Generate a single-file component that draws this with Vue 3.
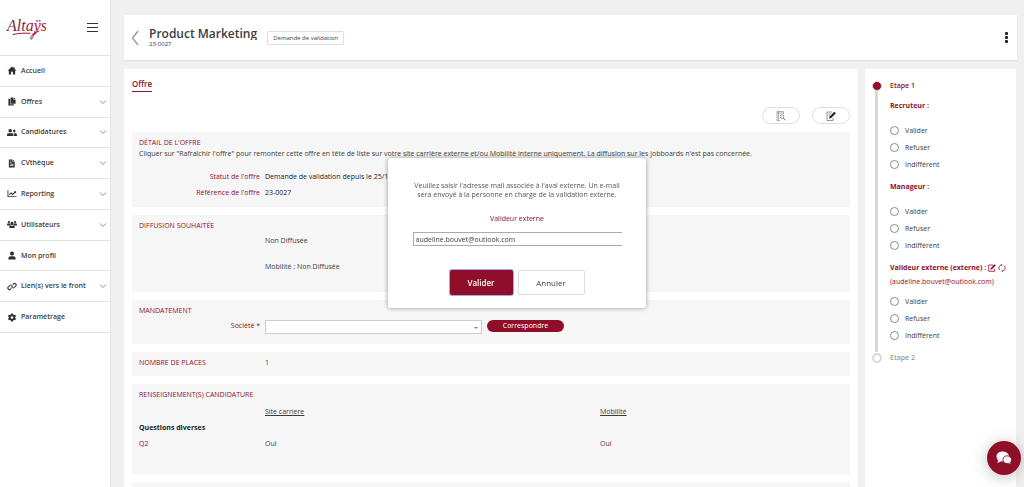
<template>
  <div class="layout">
    <aside class="sidebar">
      <div class="sidebar-head">
        <svg class="logo" viewBox="0 0 40 28" role="img" aria-label="Altaÿs">
          <defs>
            <linearGradient id="logoGradient" x1="0" x2="1">
              <stop offset="0" stop-color="#5d2440" />
              <stop offset="1" stop-color="#c4122f" />
            </linearGradient>
          </defs>
          <text x="1" y="17" class="logo-text">Altaÿs</text>
          <path d="M7 20.500C13 19 18 19 24 19.300M29 17C27.500 21 26.500 25.500 25 25C24 23 26 20 33 17" fill="none" stroke="#a3152f" stroke-width="1" stroke-linecap="round" />
        </svg>
        <button class="burger" aria-label="Menu">
          <span></span><span></span><span></span>
        </button>
      </div>
      <nav class="menu">
        <a v-for="item in menu" :key="item.label" href="#" class="menu-item">
          <svg class="menu-icon" :viewBox="item.box" aria-hidden="true">
            <path :d="item.icon" fill="#2f3033" fill-rule="evenodd" />
          </svg>
          <span class="menu-label">{{ item.label }}</span>
          <svg v-if="item.children" class="menu-chevron" viewBox="0 0 8 6" aria-hidden="true">
            <path d="M1 1.500L4 4.500L7 1.500" fill="none" stroke="#8c8c8c" />
          </svg>
        </a>
      </nav>
    </aside>

    <main class="main">
      <header class="page-head">
        <button class="back" aria-label="Retour">
          <svg viewBox="0 0 8 16"><path d="M7 1L1.500 8L7 15" fill="none" stroke="#a0a0a0" stroke-width="1.500" /></svg>
        </button>
        <div class="page-title">
          <h1>Product Marketing</h1>
          <p>23-0027</p>
        </div>
        <span class="status">Demande de validation</span>
        <button class="more" aria-label="Plus d'actions">
          <span></span><span></span><span></span>
        </button>
      </header>

      <div class="columns">
        <div class="offer">
          <a href="#" class="tab">Offre</a>
          <div class="actions">
            <button class="pill" aria-label="Aperçu">
              <svg viewBox="0 0 10 10">
                <path d="M4 9.500H1V.5H7.500V3M1 2H7.500M2.500 .5V9.500" fill="none" stroke="#999" stroke-width=".8" />
                <circle cx="6" cy="5.500" r="1.800" fill="#fff" stroke="#777" stroke-width=".8" />
                <path d="M7.300 7L9.300 9.300" stroke="#777" />
              </svg>
            </button>
            <button class="pill" aria-label="Modifier">
              <svg viewBox="0 0 10 10">
                <path d="M6 1H1V9.500H7V7M2.500 3H5M2.500 5H4" fill="none" stroke="#888" stroke-width=".9" />
                <path d="M3 7.800L3.700 5.500L8.300 .8L9.900 2.300L5.200 7Z" fill="#222" />
              </svg>
            </button>
          </div>

          <div class="sections">
            <section class="section detail">
              <h2>Détail de l'offre</h2>
              <p class="hint">Cliquer sur "Rafraîchir l'offre" pour remonter cette offre en tête de liste sur votre site carrière externe et/ou Mobilité interne uniquement. La diffusion sur les jobboards n'est pas concernée.</p>
              <dl class="fields">
                <dt>Statut de l'offre</dt>
                <dd>Demande de validation depuis le 25/10/2023</dd>
                <dt>Référence de l'offre</dt>
                <dd>23-0027</dd>
              </dl>
            </section>

            <section class="section diffusion">
              <h2>Diffusion souhaitée</h2>
              <p>Non Diffusée</p>
              <p>Mobilité : Non Diffusée</p>
            </section>

            <section class="section mandate">
              <h2>Mandatement</h2>
              <div class="mandate-row">
                <label for="company">Société *</label>
                <div class="select-wrap">
                  <select id="company" v-model="company">
                    <option value=""></option>
                  </select>
                </div>
                <button class="match">Correspondre</button>
              </div>
            </section>

            <section class="section places">
              <h2>Nombre de places</h2>
              <p>1</p>
            </section>

            <section class="section info">
              <h2>Renseignement(s) candidature</h2>
              <table>
                <thead>
                  <tr>
                    <td></td>
                    <th scope="col">Site carriere</th>
                    <th scope="col">Mobilité</th>
                  </tr>
                </thead>
                <tbody>
                  <tr>
                    <th scope="rowgroup" class="group-name" colspan="3">Questions diverses</th>
                  </tr>
                  <tr>
                    <th scope="row" class="question">Q2</th>
                    <td>Oui</td>
                    <td>Oui</td>
                  </tr>
                </tbody>
              </table>
            </section>

            <section class="section next"></section>
          </div>
        </div>

        <aside class="steps">
          <div class="step current">
            <h3>Etape 1</h3>
            <fieldset v-for="group in groups" :key="group.title">
              <legend>
                {{ group.title }}
                <template v-if="group.email">
                  <button class="mini" aria-label="Modifier le valideur">
                    <svg viewBox="0 0 8 8">
                      <path d="M5 1H.7V7.300H6.500V5" fill="none" stroke="#8f0f2b" stroke-width=".8" />
                      <path d="M2.300 5.800L2.800 4L6.500 .2L7.800 1.500L4.100 5.300Z" fill="#8f0f2b" />
                    </svg>
                  </button>
                  <button class="mini" aria-label="Relancer">
                    <svg viewBox="0 0 8 8">
                      <path d="M1.800 6.300A3.200 3.200 0 0 1 3.500 .9M6.200 1.700A3.200 3.200 0 0 1 4.500 7.100" fill="none" stroke="#8f0f2b" stroke-width=".8" />
                      <path d="M3.200 .1L4.800 .9L3.400 2ZM4.800 7.900L3.200 7.100L4.600 6Z" fill="#8f0f2b" />
                    </svg>
                  </button>
                </template>
              </legend>
              <p v-if="group.email" class="email">({{ group.email }})</p>
              <label v-for="choice in choices" :key="choice" class="choice">
                <input type="radio" :name="group.title" :value="choice" v-model="group.answer" />
                {{ choice }}
              </label>
            </fieldset>
          </div>
          <div class="step upcoming">
            <h3>Etape 2</h3>
          </div>
        </aside>
      </div>
    </main>

    <div v-if="isOpen" class="overlay">
      <form class="modal" role="dialog" aria-labelledby="modalText" @submit.prevent="closeModal">
        <p id="modalText">Veuillez saisir l'adresse mail associée à l'aval externe. Un e-mail sera envoyé à la personne en charge de la validation externe.</p>
        <label for="email">Valideur externe</label>
        <input id="email" type="text" v-model="email" />
        <div class="modal-actions">
          <button type="submit" class="confirm">Valider</button>
          <button type="button" class="cancel" @click="closeModal">Annuler</button>
        </div>
      </form>
    </div>

    <button class="chat" aria-label="Discussion">
      <svg viewBox="0 0 16 14">
        <path d="M6.500 .5C2.900 .5 .5 2.700 .5 5.500C.5 7 1.200 8.300 2.300 9.200C2.200 10.200 1.700 11 1 11.700C2.700 11.700 4.100 11.100 5 10.300C5.600 10.400 6.200 10.400 6.700 10.400C10.200 10.300 13 8.300 13 5.500C13 2.700 10.200 .5 6.500 .5Z" fill="#fff" />
        <path d="M11 4.800C8.800 4.800 6.900 6.400 6.900 8.700C6.900 11 8.700 12.500 11 12.500C11.500 12.500 12 12.400 12.400 12.300C13.200 12.900 14.200 13.200 15.200 13.200C14.800 12.700 14.500 12 14.500 11.300C15.100 10.600 15.500 9.700 15.500 8.700C15.500 6.400 13.500 4.800 11 4.800Z" fill="#fff" stroke="#8f0f2b" stroke-width=".9" />
      </svg>
    </button>
  </div>
</template>

<script setup>
import { ref } from 'vue'

const isOpen = ref(true)
const email = ref('audeline.bouvet@outlook.com')
const company = ref('')

const choices = ['Valider', 'Refuser', 'Indifférent']

const groups = ref([
  { title: 'Recruteur :', answer: '' },
  { title: 'Manageur :', answer: '' },
  { title: 'Valideur externe (externe) :', email: 'audeline.bouvet@outlook.com', answer: '' }
])

const person = 'M10 1A4.500 4.500 0 0 1 10 10A4.500 4.500 0 0 1 10 1ZM2 19V16C2 13 4 11.500 7 11.500H13C16 11.500 18 13 18 16V19Z'

const menu = [
  { label: 'Accueil', box: '0 0 20 20', icon: 'M10 1L13.500 4.300V2.500H16V6.700L20 10.500H17V19H12V13H8V19H3V10.500H0Z' },
  { label: 'Offres', children: true, box: '0 0 20 20', icon: 'M7 1H13V6H18V15H7ZM14 1L18 5H14ZM2 4H6V16H14V19H2Z' },
  { label: 'Candidatures', children: true, box: '0 0 22 20', icon: 'M7 2A4 4 0 0 1 7 10A4 4 0 0 1 7 2ZM0 18V15C0 12.500 2 11.500 4 11.500H10C12 11.500 14 12.500 14 15V18ZM16 3.500A3.300 3.300 0 0 1 16 10A3.300 3.300 0 0 1 16 3.500ZM15.500 18V15C15.500 13.500 15 12.500 14.200 11.500H18C20.500 11.500 22 13 22 15V18Z' },
  { label: 'CVthèque', children: true, box: '0 0 20 20', icon: 'M3 1H11V6H16V19H3ZM12 1L16 5H12ZM5 4V5.200H9V4ZM5 7V8.200H9V7ZM6 10.500V12H13V10.500ZM6 14V15.500H13V14Z' },
  { label: 'Reporting', children: true, box: '0 0 20 20', icon: 'M0 3H2V16H20V18H0ZM3.500 11.500L8 7L11.500 10.500L15.500 6.500L14 5H19V10L17.300 8.300L11.500 14L8 10.500L5 13.200Z' },
  { label: 'Utilisateurs', children: true, box: '0 0 22 20', icon: 'M4 2A2.500 2.500 0 0 1 4 7A2.500 2.500 0 0 1 4 2ZM18 2A2.500 2.500 0 0 1 18 7A2.500 2.500 0 0 1 18 2ZM11 4A3.500 3.500 0 0 1 11 11A3.500 3.500 0 0 1 11 4ZM0 12V10C0 8.500 1 8 2 8H6.500C6.800 10 7.500 11 8.500 12ZM22 12V10C22 8.500 21 8 20 8H15.500C15.200 10 14.500 11 13.500 12ZM5 18V15.500C5 13.500 6 12.800 8 12.800H14C16 12.800 17 13.500 17 15.500V18Z' },
  { label: 'Mon profil', box: '0 0 20 20', icon: person },
  { label: 'Lien(s) vers le front', children: true, box: '0 0 22 20', icon: 'M10 14.500L8.500 16.500A4.500 4.500 0 0 1 2 10L6 6.500A4.500 4.500 0 0 1 13 11L11.300 10A2.500 2.500 0 0 0 7.500 8L3.500 11.500A2.500 2.500 0 0 0 7 15L8.500 13.500ZM12 5.500L13.500 3.500A4.500 4.500 0 0 1 20 10L16 13.500A4.500 4.500 0 0 1 9 9L10.700 10A2.500 2.500 0 0 0 14.500 12L18.500 8.500A2.500 2.500 0 0 0 15 5L13.500 6.500Z' },
  { label: 'Paramétrage', box: '0 0 20 20', icon: 'M8 1H12L12.500 3.500L14.500 4.600L17 3.800L19 7.200L17 9V11L19 12.800L17 16.200L14.500 15.400L12.500 16.500L12 19H8L7.500 16.500L5.500 15.400L3 16.200L1 12.800L3 11V9L1 7.200L3 3.800L5.500 4.600L7.500 3.500ZM10 7A3 3 0 0 0 10 13A3 3 0 0 0 10 7Z' }
]

function closeModal() {
  isOpen.value = false
}
</script>

<style>
body {
  margin: 0;
  background: #f0f0f0;
}
</style>

<style scoped>
.layout {
  display: flex;
  height: 100vh;
  overflow: hidden;
  font-family: "Open Sans", sans-serif;
  font-size: 7px;
  line-height: 12px;
  color: #3c3c3c;
  background: #f0f0f0;
}

.layout *,
.layout *::before,
.layout *::after {
  box-sizing: border-box;
}

h1, h2, h3, p, dl, dd, fieldset, legend {
  margin: 0;
  padding: 0;
  border: none;
  font-weight: 400;
}

button, input, select {
  font: inherit;
  color: inherit;
}

button {
  padding: 0;
  border: none;
  background: none;
  cursor: pointer;
}

a {
  color: inherit;
  text-decoration: none;
}

svg {
  display: block;
}

.sidebar {
  flex: 0 0 111px;
  background: #fff;
  border-right: 1px solid #e2e2e2;
}

.sidebar-head {
  display: flex;
  justify-content: space-between;
  align-items: center;
  height: 55px;
  padding: 0 12px 0 6px;
}

.logo {
  width: 40px;
  height: 28px;
}

.logo-text {
  font-family: "Liberation Serif", serif;
  font-size: 16px;
  font-style: italic;
  fill: url(#logoGradient);
}

.burger {
  display: flex;
  flex-direction: column;
  gap: 3px;
  width: 11px;
}

.burger span {
  height: 1px;
  background: #333;
}

.menu {
  display: grid;
  grid-auto-rows: 1fr;
  height: 278px;
  border-bottom: 1px solid #e2e2e2;
}

.menu-item {
  display: flex;
  align-items: center;
  gap: 4px;
  padding: 0 3px 0 7px;
  border-top: 1px solid #e2e2e2;
  font-weight: 600;
}

.menu-icon {
  width: 10px;
  height: 9px;
}

.menu-label {
  flex: 1;
}

.menu-chevron {
  width: 8px;
  height: 6px;
}

.main {
  flex: 1;
  min-width: 0;
  display: flex;
  flex-direction: column;
  gap: 9px;
  padding: 15px 7px 0 13px;
}

.page-head {
  display: flex;
  align-items: center;
  flex: 0 0 45px;
  padding: 0 9px 0 7px;
  background: #fff;
  box-shadow: 0 1px 1px #ddd;
}

.back svg {
  width: 8px;
  height: 16px;
}

.page-title {
  margin: 0 10px;
}

.page-title h1 {
  height: 13px;
  overflow: hidden;
  font-size: 12px;
  line-height: 14px;
  font-weight: 600;
}

.page-title p {
  font-size: 6px;
  line-height: 8px;
}

.status {
  padding: 0 5px;
  border: 1px solid #ddd;
  border-radius: 2px;
  font-size: 6px;
}

.more {
  display: flex;
  flex-direction: column;
  gap: 1px;
  margin-left: auto;
}

.more span {
  width: 3px;
  height: 3px;
  border-radius: 1px;
  background: #222;
}

.columns {
  flex: 1;
  min-height: 0;
  display: flex;
  gap: 7px;
}

.offer {
  flex: 1;
  min-width: 0;
  padding: 9px 8px 0;
  background: #fff;
}

.tab {
  display: inline-block;
  height: 14px;
  border-bottom: 1px solid #8f0f2b;
  color: #8f0f2b;
  font-size: 8px;
  font-weight: 600;
}

.actions {
  display: flex;
  justify-content: flex-end;
  gap: 12px;
  padding: 15px 0 8px;
}

.pill {
  display: grid;
  place-items: center;
  width: 38px;
  height: 17px;
  border: 1px solid #ddd;
  border-radius: 9px;
}

.pill svg {
  width: 10px;
  height: 10px;
}

.sections {
  display: flex;
  flex-direction: column;
  gap: 8px;
}

.section {
  padding: 5px 7px 0;
  background: #f6f6f6;
}

.section h2 {
  font-size: 7px;
  text-transform: uppercase;
  color: #8f0f2b;
}

.detail {
  height: 75px;
}

.hint {
  line-height: 10px;
  white-space: nowrap;
}

.fields {
  display: grid;
  grid-template-columns: 121px 1fr;
  gap: 4px 5px;
  padding-top: 12px;
}

.fields dt {
  text-align: right;
  color: #8f0f2b;
}

.fields dd {
  color: #222;
}

.diffusion {
  height: 77px;
}

.diffusion p {
  padding: 3px 0 11px 126px;
}

.mandate {
  height: 44px;
}

.mandate-row {
  display: flex;
  gap: 5px;
  padding-top: 3px;
}

.mandate-row label {
  width: 121px;
  text-align: right;
  color: #8f0f2b;
}

.select-wrap {
  position: relative;
  width: 217px;
}

.select-wrap::after {
  content: "";
  position: absolute;
  right: 4px;
  top: 7px;
  border: 2px solid transparent;
  border-top-color: #888;
}

.select-wrap select {
  appearance: none;
  display: block;
  width: 100%;
  height: 14px;
  border: 1px solid #ccc;
  background: #fff;
}

.match {
  width: 77px;
  height: 12px;
  border-radius: 6px;
  background: #8f0f2b;
  color: #fff;
}

.places {
  display: grid;
  grid-template-columns: 126px 1fr;
  height: 24px;
}

.info {
  height: 90px;
}

.info table {
  width: 100%;
  margin-top: 3px;
  border-collapse: collapse;
  table-layout: fixed;
}

.info th,
.info td {
  height: 16px;
  padding: 0;
  text-align: left;
  font-weight: 400;
}

.info thead td {
  width: 126px;
}

.info thead th {
  text-decoration: underline;
}

.info thead th:last-child {
  width: 243px;
}

.info .group-name {
  font-weight: 700;
  color: #222;
}

.info .question {
  color: #8f0f2b;
}

.next {
  height: 60px;
}

.steps {
  flex: 0 0 151px;
  margin-right: 1px;
  padding: 11px 0 0 10px;
  background: #fff;
}

.step {
  position: relative;
  padding-left: 15px;
}

.step::before {
  content: "";
  position: absolute;
  left: -3px;
  top: 1px;
  z-index: 1;
  width: 10px;
  height: 10px;
  border: 2px solid #d8d8d8;
  border-radius: 50%;
  background: #fff;
}

.current::before {
  border-width: 1px;
  background: #8f0f2b;
}

.current {
  padding-bottom: 8px;
}

.current::after {
  content: "";
  position: absolute;
  left: 0;
  top: 11px;
  bottom: 0;
  width: 3px;
  background: #d8d8d8;
}

.step h3 {
  font-size: 7px;
  font-weight: 600;
  color: #8f0f2b;
}

.upcoming h3 {
  color: #999;
}

.step fieldset {
  min-width: 0;
  margin-top: 8px;
}

.step legend {
  display: flex;
  align-items: center;
  gap: 2px;
  height: 12px;
  margin-bottom: 10px;
  font-weight: 700;
  white-space: nowrap;
  color: #8f0f2b;
}

.step legend:has(.mini) {
  margin-bottom: 2px;
}

.mini svg {
  width: 8px;
  height: 8px;
}

.email {
  margin-bottom: 5px;
  color: #8f0f2b;
}

.choice {
  display: flex;
  align-items: center;
  gap: 6px;
  height: 17px;
}

.choice input {
  appearance: none;
  width: 9px;
  height: 9px;
  margin: 0;
  border: 1px solid #888;
  border-radius: 50%;
}

.choice input:checked {
  background: #8f0f2b;
}

.overlay {
  position: fixed;
  inset: 0;
  display: flex;
  justify-content: center;
  align-items: flex-start;
  padding: 158px 0 0 10px;
}

.modal {
  display: flex;
  flex-direction: column;
  align-items: center;
  width: 258px;
  height: 150px;
  padding: 23px 20px 0;
  border-radius: 3px;
  background: #fff;
  box-shadow: 0 0 5px rgba(0, 0, 0, 0.4);
}

.modal p {
  line-height: 9px;
  text-align: center;
  color: #555;
}

.modal label {
  margin-top: 14px;
  color: #8f0f2b;
}

.modal input {
  width: 209px;
  height: 14px;
  margin-top: 7px;
  padding: 0 2px;
  border: 1px solid #aaa;
  border-right: none;
  background: #fff;
}

.modal-actions {
  display: flex;
  gap: 5px;
  margin-top: 24px;
}

.modal-actions button {
  height: 25px;
  border-radius: 2px;
  font-size: 8px;
}

.modal-actions .confirm {
  width: 63px;
  background: #8f0f2b;
  color: #fff;
  font-weight: 600;
  box-shadow: 0 0 0 1px #a9a2ee;
}

.modal-actions .cancel {
  width: 67px;
  border: 1px solid #ddd;
}

.chat {
  position: fixed;
  right: 3px;
  bottom: 12px;
  display: grid;
  place-items: center;
  width: 34px;
  height: 34px;
  border-radius: 50%;
  background: #8f0f2b;
  box-shadow: 0 2px 16px rgba(0, 0, 0, 0.25);
}

.chat svg {
  width: 16px;
  height: 14px;
}
</style>
